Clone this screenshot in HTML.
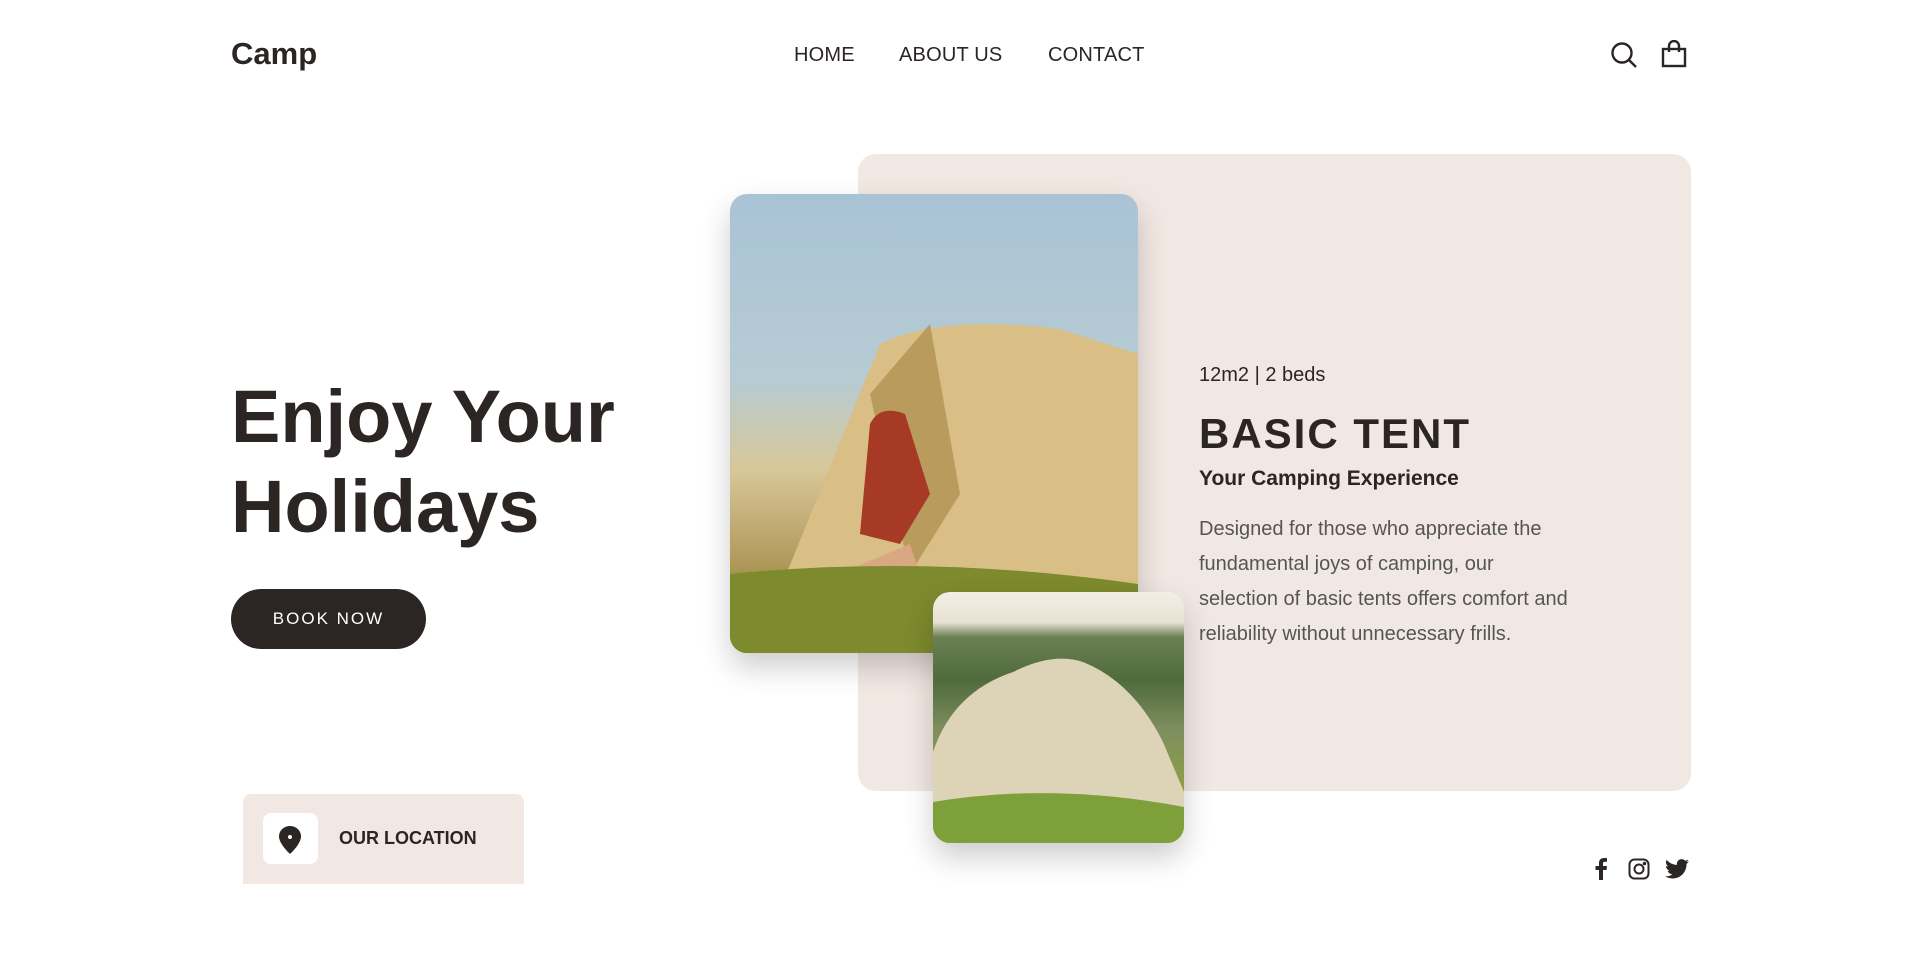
<!DOCTYPE html>
<html><head><meta charset="utf-8"><style>
*{margin:0;padding:0;box-sizing:border-box}
body{width:1917px;height:970px;background:#fff;font-family:"Liberation Sans",sans-serif;color:#2b2523;position:relative;overflow:hidden}
.abs{position:absolute}
.logo{left:231px;top:36px;font-size:31px;font-weight:700}
.nav{top:44px;font-size:20px;font-weight:500;letter-spacing:.2px}
.card{left:858px;top:154px;width:833px;height:637px;background:#f2e8e3;border-radius:18px}
.img1{left:730px;top:194px;width:408px;height:459px;border-radius:17px;overflow:hidden;box-shadow:0 14px 30px rgba(0,0,0,.2);
background:linear-gradient(180deg,#a9c3d6 0%,#b6cbd3 40%,#d7c79a 60%,#b29a5c 80%,#7d8a2d 90%,#5c6b22 100%)}
.img2{left:933px;top:592px;width:251px;height:251px;border-radius:17px;overflow:hidden;box-shadow:0 14px 30px rgba(0,0,0,.2);
background:linear-gradient(180deg,#f3eee6 0%,#e9e3d4 12%,#6b8053 18%,#4f6b3c 35%,#7f8e5e 55%,#8fa047 80%,#6b8c2a 100%)}
h1{left:231px;top:372px;font-size:74px;line-height:90px;font-weight:700}
.btn{left:231px;top:589px;width:195px;height:60px;border-radius:30px;background:#2b2523;color:#fff;font-size:17px;letter-spacing:2px;text-align:center;line-height:60px}
.t{left:1199px}
</style></head><body>
<div class="abs logo">Camp</div>
<div class="abs nav" style="left:794px">HOME</div>
<div class="abs nav" style="left:899px">ABOUT US</div>
<div class="abs nav" style="left:1048px">CONTACT</div>
<svg class="abs" style="left:1610px;top:41px" width="28" height="28" viewBox="0 0 28 28" fill="none" stroke="#2b2523" stroke-width="2.4"><circle cx="12" cy="12" r="9.5"/><path d="M19 19l7 7"/></svg>
<svg class="abs" style="left:1661px;top:40px" width="26" height="28" viewBox="0 0 26 28" fill="none" stroke="#2b2523" stroke-width="2.4"><rect x="2" y="9" width="22" height="17"/><path d="M8 12V6a5 5 0 0 1 10 0v6"/></svg>
<div class="abs card"></div>
<div class="abs img1">
<svg width="408" height="459" viewBox="0 0 408 459"><path d="M40 420 L150 150 Q210 120 330 135 L408 160 L408 400 L250 410 Z" fill="#d9bf86"/><path d="M140 200 L200 130 L230 300 L180 380 Z" fill="#b99b5e"/><path d="M140 230 Q150 210 175 220 L200 300 L170 350 L130 340 Z" fill="#a63a25"/><path d="M60 400 L180 350 L190 380 L90 420 Z" fill="#d9a883"/><path d="M0 380 Q200 360 408 390 L408 459 L0 459Z" fill="#7d8a2d"/></svg>
</div>
<div class="abs img2">
<svg width="251" height="251" viewBox="0 0 251 251"><path d="M0 160 Q20 100 80 80 Q120 60 150 70 Q200 90 230 150 L251 200 L251 251 L0 251Z" fill="#ddd3b6"/><path d="M0 210 Q120 190 251 215 L251 251 L0 251Z" fill="#7ea03a"/></svg>
</div>
<h1 class="abs">Enjoy Your<br>Holidays</h1>
<div class="abs btn">BOOK NOW</div>
<div class="abs t" style="top:364px;font-size:20px">12m2 | 2 beds</div>
<div class="abs t" style="top:410px;font-size:42px;font-weight:700;letter-spacing:2px">BASIC TENT</div>
<div class="abs t" style="top:467px;font-size:21px;font-weight:700">Your Camping Experience</div>
<div class="abs t" style="top:512px;width:460px;font-size:20px;line-height:35px;color:#555;white-space:nowrap">Designed for those who appreciate the<br>fundamental joys of camping, our<br>selection of basic tents offers comfort and<br>reliability without unnecessary frills.</div>
<div class="abs" style="left:243px;top:794px;width:281px;height:90px;background:#f2e8e3;border-radius:8px 8px 0 0"></div>
<div class="abs" style="left:263px;top:813px;width:55px;height:51px;background:#fff;border-radius:8px"></div>
<svg class="abs" style="left:278px;top:825px" width="24" height="30" viewBox="0 0 24 30"><path d="M12 1C6 1 1 5.5 1 11.5 1 19 12 29 12 29s11-10 11-17.5C23 5.5 18 1 12 1z" fill="#2b2523"/><circle cx="12" cy="12" r="2" fill="#fff"/></svg>
<div class="abs" style="left:339px;top:828px;font-size:18px;font-weight:700">OUR LOCATION</div>
<svg class="abs" style="left:1594px;top:858px" width="14" height="22" viewBox="0 0 14 22"><path d="M9 22V12h3.5l.5-4H9V5.5c0-1 .4-1.8 1.9-1.8H13V.2C12.5.1 11.3 0 10 0 7 0 5 1.8 5 5.1V8H1.5v4H5v10z" fill="#2b2523"/></svg>
<svg class="abs" style="left:1628px;top:858px" width="22" height="22" viewBox="0 0 22 22" fill="none" stroke="#2b2523" stroke-width="2"><rect x="1.5" y="1.5" width="19" height="19" rx="5"/><circle cx="11" cy="11" r="4.5"/><circle cx="16.5" cy="5.5" r=".8" fill="#2b2523"/></svg>
<svg class="abs" style="left:1665px;top:859px" width="24" height="20" viewBox="0 0 24 20"><path d="M24 2.4c-.9.4-1.8.6-2.8.8 1-.6 1.8-1.6 2.2-2.7-1 .6-2 1-3.1 1.2A4.9 4.9 0 0 0 11.9 6 14 14 0 0 1 1.7.9a4.9 4.9 0 0 0 1.5 6.6c-.8 0-1.6-.3-2.2-.6 0 2.4 1.7 4.4 3.9 4.8-.7.2-1.5.2-2.2.1.6 2 2.4 3.4 4.6 3.4A9.9 9.9 0 0 1 0 17.3 14 14 0 0 0 7.5 19.5c9.1 0 14-7.5 14-14v-.6c1-.7 1.8-1.6 2.5-2.5z" fill="#2b2523"/></svg>
</body></html>
